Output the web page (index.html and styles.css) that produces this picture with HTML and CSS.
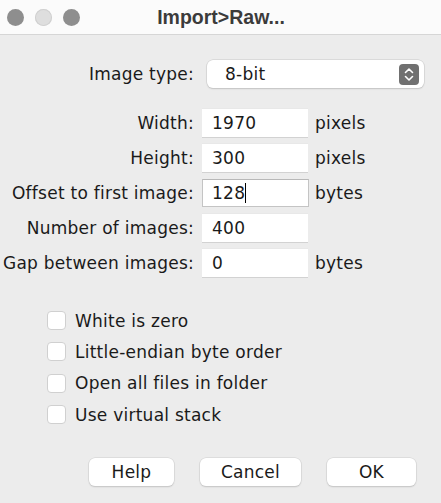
FILE: index.html
```html
<!DOCTYPE html>
<html>
<head>
<meta charset="utf-8">
<link rel="stylesheet" href="styles.css">
</head>
<body>
<div class="window">
  <div class="titlebar">
    <div class="lights">
      <span class="light dark"></span>
      <span class="light pale"></span>
      <span class="light dark"></span>
    </div>
    <div class="title">Import&gt;Raw...</div>
  </div>
  <div class="content">
    <div class="typerow">
      <div class="label">Image type:</div>
      <div class="popup">
        <span class="popup-text">8-bit</span>
        <span class="stepper">
          <svg width="20" height="21" viewBox="0 0 20 21">
            <rect x="0" y="0" width="20" height="21" rx="4" fill="#707070"/>
            <path d="M6.5 8.5 L10 5 L13.5 8.5" fill="none" stroke="#fff" stroke-width="1.6" stroke-linecap="round" stroke-linejoin="round"/>
            <path d="M6.5 12.5 L10 16 L13.5 12.5" fill="none" stroke="#fff" stroke-width="1.6" stroke-linecap="round" stroke-linejoin="round"/>
          </svg>
        </span>
      </div>
    </div>

    <div class="form">
      <div class="label">Width:</div>
      <div class="field">1970</div>
      <div class="unit">pixels</div>

      <div class="label">Height:</div>
      <div class="field">300</div>
      <div class="unit">pixels</div>

      <div class="label">Offset to first image:</div>
      <div class="field focused">128<span class="caret"></span></div>
      <div class="unit">bytes</div>

      <div class="label">Number of images:</div>
      <div class="field">400</div>
      <div class="unit"></div>

      <div class="label">Gap between images:</div>
      <div class="field">0</div>
      <div class="unit">bytes</div>
    </div>

    <div class="checks">
      <div class="check"><span class="box"></span><span>White is zero</span></div>
      <div class="check"><span class="box"></span><span>Little-endian byte order</span></div>
      <div class="check"><span class="box"></span><span>Open all files in folder</span></div>
      <div class="check"><span class="box"></span><span>Use virtual stack</span></div>
    </div>

    <div class="buttons">
      <div class="btn btn-help">Help</div>
      <div class="btn btn-cancel">Cancel</div>
      <div class="btn btn-ok">OK</div>
    </div>
  </div>
</div>
</body>
</html>
```
FILE: styles.css
```css
html, body {
  margin: 0;
  padding: 0;
}
body {
  width: 441px;
  height: 503px;
  overflow: hidden;
  background: #ececec;
  font-family: "DejaVu Sans", "Noto Sans", sans-serif;
  font-size: 17px;
  letter-spacing: 0.25px;
  color: #1a1a1a;
}
.window {
  width: 441px;
  height: 503px;
  display: flex;
  flex-direction: column;
}
.titlebar {
  height: 34px;
  background: #fbfbfb;
  border-bottom: 1px solid #d6d6d6;
  display: flex;
  align-items: center;
  position: relative;
}
.lights {
  display: flex;
  gap: 11px;
  padding-left: 7px;
  padding-top: 1px;
}
.light {
  width: 17px;
  height: 17px;
  border-radius: 50%;
  display: block;
}
.light.dark {
  background: #8e8e8e;
}
.light.pale {
  background: #dedede;
  box-shadow: inset 0 0 0 1px #d0d0d0;
}
.title {
  position: absolute;
  left: 0;
  right: 0;
  top: 0;
  bottom: 0;
  display: flex;
  align-items: center;
  justify-content: center;
  font-family: "Liberation Sans", Arial, sans-serif;
  font-weight: bold;
  font-size: 19.5px;
  letter-spacing: 0;
  color: #3b3b3b;
  padding-left: 1px;
}
.content {
  flex: 1;
  display: flex;
  flex-direction: column;
}
.typerow {
  display: grid;
  grid-template-columns: 202px auto;
  margin-top: 25px;
  height: 28px;
}
.form {
  display: grid;
  grid-template-columns: 202px 113px auto;
  grid-auto-rows: 28px;
  row-gap: 7px;
  margin-top: 21px;
}
.label {
  text-align: right;
  padding-right: 8px;
  line-height: 28px;
  white-space: nowrap;
}
.popup {
  margin-left: 5px;
  width: 217px;
  height: 28px;
  box-sizing: border-box;
  background: #ffffff;
  border-radius: 6px;
  box-shadow: 0 0 0 0.5px #c9c9c9, 0 1px 1.5px rgba(0,0,0,0.18);
  display: flex;
  align-items: center;
  justify-content: space-between;
  padding-left: 18px;
  padding-right: 5px;
}
.popup-text {
  line-height: 28px;
}
.stepper {
  display: flex;
  align-items: center;
}
.field {
  width: 106px;
  height: 28px;
  box-sizing: border-box;
  background: #ffffff;
  padding-left: 10px;
  line-height: 28px;
  box-shadow: 0 1px 0 #d2d2d2, 0 -0.5px 0 #e4e4e4;
}
.field.focused {
  box-shadow: none;
  border: 1px solid #c4c4c4;
  border-top-color: #b8b8b8;
  padding-left: 9px;
  line-height: 26px;
  width: 107px;
}
.caret {
  display: inline-block;
  width: 1px;
  height: 20px;
  background: #000;
  vertical-align: -4px;
  margin-left: 0;
}
.unit {
  line-height: 28px;
}
.checks {
  display: flex;
  flex-direction: column;
  margin-top: 28px;
  padding-left: 47px;
}
.check {
  height: 31.3px;
  display: flex;
  align-items: center;
  gap: 9px;
}
.box {
  width: 19px;
  height: 19px;
  box-sizing: border-box;
  background: #ffffff;
  border: 1px solid #d0d0d0;
  border-radius: 4px;
  display: block;
}
.buttons {
  display: flex;
  gap: 26px;
  padding-left: 89px;
  margin-top: 28px;
}
.btn {
  height: 28px;
  box-sizing: border-box;
  background: #ffffff;
  border-radius: 6px;
  box-shadow: 0 0 0 0.5px #cfcfcf, 0 1px 1.5px rgba(0,0,0,0.2);
  text-align: center;
  line-height: 28px;
}
.btn-help { width: 85px; }
.btn-cancel { width: 101px; }
.btn-ok { width: 89px; }
```
